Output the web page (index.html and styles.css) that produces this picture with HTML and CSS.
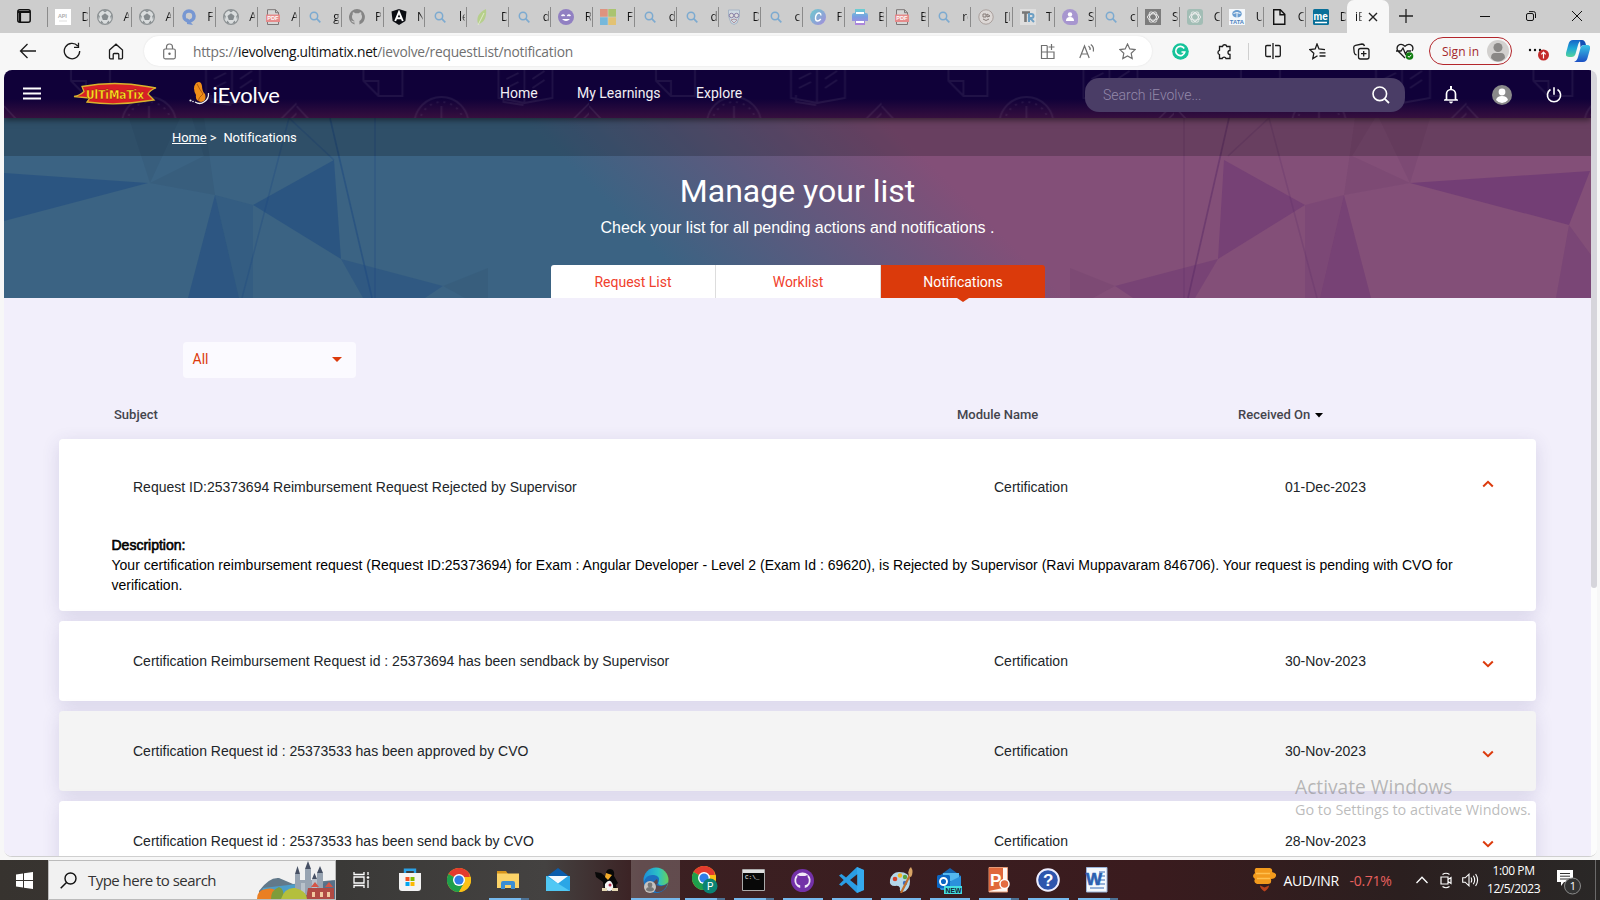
FILE: index.html
```html
<!DOCTYPE html>
<html lang="en">
<head>
<meta charset="utf-8">
<title>iEvolve</title>
<link rel="stylesheet" href="styles.css">
</head>
<body>
<svg class="defs" width="0" height="0">
  <symbol id="ball" viewBox="0 0 16 16"><circle cx="8" cy="8" r="7.400" fill="#d9dcdd" stroke="#8d9294" stroke-width="1.200"/><path d="M8 4.300l3.500 2.600-1.300 4.100H5.800L4.500 6.900z" fill="#858b8e"/><path d="M5 1.200h6L8 3.200zM.8 5.500l2 1.500-.8 3.500zM15.200 5.500l-2 1.500.8 3.500zM3.500 13.500l1-2 2.300 3.200zM12.500 13.500l-1-2-2.300 3.200z" fill="#858b8e"/></symbol>
  <symbol id="mag" viewBox="0 0 16 16"><circle cx="7" cy="7" r="3.700" fill="none" stroke="#7caad0" stroke-width="1.500"/><path d="M9.700 9.700l3.600 3.600" stroke="#7caad0" stroke-width="1.700"/></symbol>
  <symbol id="pdf" viewBox="0 0 16 16"><path d="M2.500 15.500V.7h8l3 3v11.800z" fill="#d6d6d6" stroke="#7b7676"/><path d="M10.500.7v3h3" fill="none" stroke="#7b7676"/><rect x="1" y="5.500" width="14" height="7.500" fill="#e58b8b"/><text x="2.300" y="11.400" font-size="5.600" font-weight="700" fill="#fff" font-family="Liberation Sans">PDF</text></symbol>
  <symbol id="gpt" viewBox="0 0 16 16"><g fill="none" stroke="#eee" stroke-width=".9"><ellipse cx="8" cy="8" rx="5.600" ry="3.200"/><ellipse cx="8" cy="8" rx="5.600" ry="3.200" transform="rotate(60 8 8)"/><ellipse cx="8" cy="8" rx="5.600" ry="3.200" transform="rotate(120 8 8)"/></g></symbol>
  <symbol id="chev" viewBox="0 0 12 8"><path d="M1.200 1.500L6 6.200l4.800-4.700" fill="none" stroke="#dc3a0c" stroke-width="2"/></symbol>
  <symbol id="chrome" viewBox="0 0 24 24"><circle cx="12" cy="12" r="12" fill="#fbc116"/><path d="M12 12L1.600 6A12 12 0 0 1 22.400 6z" fill="#e33b2e"/><path d="M12 12L1.600 6A12 12 0 0 0 12 24l5.200-9z" fill="#1e9f4c"/><path d="M12 12h10.400A12 12 0 0 0 22.400 6H12z" fill="#e33b2e"/><path d="M17 9h6.600A12 12 0 0 1 12 24l5.200-9z" fill="#fbc116"/><circle cx="12" cy="12" r="6" fill="#fff"/><circle cx="12" cy="12" r="4.600" fill="#2f7de8"/></symbol>
</svg>

<header class="tabstrip">
  <div class="tab-actions"><svg width="14" height="14" viewBox="0 0 14 14"><rect x=".8" y=".8" width="12.400" height="12.400" rx="2" fill="none" stroke="#111" stroke-width="1.500"/><path d="M1 3h12M3 3v10" stroke="#111" stroke-width="2.200"/></svg></div>
  <div class="tab"><svg viewBox="0 0 16 16"><path fill="#fff" d="M0 0h16v16H0z"/><text x="3" y="9" font-size="5.500" font-weight="700" fill="#aaa" font-family="Lato">API</text><path d="M4 12h8" stroke="#ddd"/></svg><span>D</span></div>
  <div class="tab"><svg><use href="#ball"/></svg><span>A</span></div>
  <div class="tab"><svg><use href="#ball"/></svg><span>A</span></div>
  <div class="tab"><svg viewBox="0 0 16 16"><circle cx="8" cy="7" r="5" fill="none" stroke="#7797d2" stroke-width="3.600"/><path d="M6 9l6 7-6-1z" fill="#7797d2"/><path d="M6 8l3 0 0 3z" fill="#ccc"/></svg><span>F</span></div>
  <div class="tab"><svg><use href="#ball"/></svg><span>A</span></div>
  <div class="tab"><svg><use href="#pdf"/></svg><span>A</span></div>
  <div class="tab"><svg><use href="#mag"/></svg><span>g</span></div>
  <div class="tab"><svg viewBox="0 0 16 16"><path d="M8 0a8 8 0 0 0-2.500 15.600v-2.200C3 14 2.800 12 2 11.500c1.500-.5 2 1.300 3.600.8C6 11.500 3 11.500 3 7.500c0-1 .3-1.600.8-2.200-.2-.7-.1-1.500.1-2 1 0 1.600.5 2.200.9h3.800c.6-.4 1.200-.9 2.200-.9.200.5.300 1.300.1 2 .5.600.8 1.200.8 2.200 0 4-3 4-2.600 4.800v3.300A8 8 0 0 0 8 0z" fill="#858585"/></svg><span>P</span></div>
  <div class="tab"><svg viewBox="0 0 16 16"><path d="M8 0l7.500 2.500L14.400 12 8 16l-6.400-4L.5 2.500z" fill="#0b0d12"/><path d="M4.200 12L8 3l3.800 9M5.800 9.200h4.400" fill="none" stroke="#fff" stroke-width="1.900"/></svg><span>N</span></div>
  <div class="tab"><svg><use href="#mag"/></svg><span>le</span></div>
  <div class="tab"><svg viewBox="0 0 16 16"><path d="M12 0C4 4 2 9 4.200 15 10 14 13 8 12 0z" fill="#b6cf8b"/><path d="M10 4L4 16" stroke="#dfe9ca"/></svg><span>D</span></div>
  <div class="tab"><svg><use href="#mag"/></svg><span>d</span></div>
  <div class="tab"><svg viewBox="0 0 16 16"><circle cx="8" cy="8" r="8" fill="#9180c2"/><path d="M4 10q4 4 8 0z" fill="#fff"/><path d="M3.600 7q1.500-2 3 0M9.400 7q1.500-2 3 0" fill="none" stroke="#fff" stroke-width="1.500"/></svg><span>R</span></div>
  <div class="tab"><svg viewBox="0 0 16 16"><path fill="#de937f" d="M0 0h7.700v7.700H0z"/><path fill="#aac470" d="M8.300 0H16v7.700H8.300z"/><path fill="#76b8db" d="M0 8.300h7.700V16H0z"/><path fill="#e2c274" d="M8.300 8.300H16V16H8.300z"/></svg><span>F</span></div>
  <div class="tab"><svg><use href="#mag"/></svg><span>d</span></div>
  <div class="tab"><svg><use href="#mag"/></svg><span>d</span></div>
  <div class="tab"><svg viewBox="0 0 16 16"><path d="M2.500 1h11v6L11 14q-3 3-6 0L2.500 7z" fill="#ced9e2" stroke="#a6b4c5"/><circle cx="5.500" cy="6.500" r="2.200" fill="#ddd" stroke="#897fa5"/><circle cx="10.500" cy="6.500" r="2.200" fill="#ddd" stroke="#897fa5"/><path d="M5 11q3-2 6 0l-3 3z" fill="none" stroke="#b0949e"/></svg><span>D</span></div>
  <div class="tab"><svg><use href="#mag"/></svg><span>c</span></div>
  <div class="tab"><svg viewBox="0 0 16 16"><defs><linearGradient id="cv" x2="1" y2="1"><stop stop-color="#6bcbcf"/><stop offset="1" stop-color="#a48bdb"/></linearGradient></defs><circle cx="8" cy="8" r="8" fill="url(#cv)"/><path d="M11 6.500C11 3.500 8 3.300 6.500 5.500S5 12 7.500 12c1.500 0 2.500-1 3.300-2" fill="none" stroke="#fff" stroke-width="1.400"/></svg><span>F</span></div>
  <div class="tab"><svg viewBox="0 0 16 16"><defs><linearGradient id="pr" x2="0" y2="1"><stop stop-color="#6bcfd1"/><stop offset=".5" stop-color="#7b9ce2"/><stop offset="1" stop-color="#b383da"/></linearGradient></defs><path d="M3 4V0h10v4h1q2 0 2 2v6h-3v4H3v-4H0V6q0-2 2-2z" fill="url(#pr)"/><path d="M4 4h8M4 13h8" stroke="#fff" stroke-width="2"/></svg><span>B</span></div>
  <div class="tab"><svg><use href="#pdf"/></svg><span>B</span></div>
  <div class="tab"><svg><use href="#mag"/></svg><span>re</span></div>
  <div class="tab"><svg viewBox="0 0 16 16"><circle cx="8" cy="8" r="7.200" fill="#ddd8d6" stroke="#aaa09d"/><path d="M5 5h3v3H5zM9 5l3 2-3 1zM5 10q3 3 6 0" fill="none" stroke="#877d79"/></svg><span>[I</span></div>
  <div class="tab"><svg viewBox="0 0 16 16"><path fill="#dedede" d="M0 0h16v16H0z"/><path d="M2 3.500h8M5.500 3v10" stroke="#777" stroke-width="2.600"/><path d="M9 13V5h2.500a2 2 0 0 1 0 4H10l4 4" fill="none" stroke="#6c9fc4" stroke-width="2"/></svg><span>T.</span></div>
  <div class="tab"><svg viewBox="0 0 16 16"><path d="M8 0a8 8 0 0 1 8 8v4q0 4-4 4H8A8 8 0 0 1 8 0z" fill="#a796cf"/><circle cx="8" cy="5.500" r="2.200" fill="#fff"/><path d="M4 12q0-4 4-4t4 4z" fill="#fff"/></svg><span>S</span></div>
  <div class="tab"><svg><use href="#mag"/></svg><span>c</span></div>
  <div class="tab"><svg viewBox="0 0 16 16"><path fill="#7c7c7c" d="M0 0h16v16H0z"/><use href="#gpt"/></svg><span>S</span></div>
  <div class="tab"><svg viewBox="0 0 16 16"><rect width="16" height="16" rx="3" fill="#a2bdb5"/><use href="#gpt"/></svg><span>C</span></div>
  <div class="tab"><svg viewBox="0 0 16 16"><path fill="#f5f8fb" d="M0 0h16v16H0z"/><ellipse cx="8" cy="4.800" rx="4.800" ry="3.700" fill="#6a9dd0"/><path d="M8 3v6M4.500 4.500q3-2 7 0" stroke="#f5f8fb" fill="none"/><text x=".8" y="15" font-size="5.800" font-weight="700" fill="#4c83bf" font-family="Liberation Sans">TATA</text></svg><span>U</span></div>
  <div class="tab"><svg viewBox="0 0 16 16"><path d="M2.700 15.300V.7h6.600l4.500 4.500v10.100zM9 .7v5h5" fill="#dedede" stroke="#111" stroke-width="1.400"/></svg><span>C</span></div>
  <div class="tab"><svg viewBox="0 0 16 16"><rect width="16" height="16" rx="1.500" fill="#096f98"/><text x="0.500" y="10.500" font-size="10" font-weight="700" fill="#fff" font-family="Roboto">me</text><path d="M2 13.500h12" stroke="#fff" stroke-width="1.500"/></svg><span>D</span></div>
  <div class="tab tab-active"><span>iE</span><svg viewBox="0 0 16 16"><path d="M4 4l8 8M12 4l-8 8" stroke="#222" stroke-width="1.400"/></svg></div>
  <svg class="newtab" viewBox="0 0 14 14"><path d="M7 0v14M0 7h14" stroke="#222" stroke-width="1.300"/></svg>
  <div class="winctl">
    <svg viewBox="0 0 10 10"><path d="M0 5.500h10" stroke="#111"/></svg>
    <svg viewBox="0 0 10 10"><rect x=".5" y="2.500" width="7" height="7" rx="1.500" fill="none" stroke="#111"/><path d="M3 .6h4.500q2 0 2 2V7" fill="none" stroke="#111"/></svg>
    <svg viewBox="0 0 10 10"><path d="M0 0l10 10M10 0L0 10" stroke="#111"/></svg>
  </div>
</header>

<div class="toolbar">
  <div class="tb"><svg width="18" height="16" viewBox="0 0 18 16"><path d="M17 8H1.500M8.500 1L1.500 8l7 7" class="k"/></svg></div>
  <div class="tb"><svg width="18" height="18" viewBox="0 0 18 18"><path d="M14.800 4A7.700 7.700 0 1 0 16.700 9M15.500.8v4.500H11" class="k"/></svg></div>
  <div class="tb"><svg width="16" height="17" viewBox="0 0 16 17"><path d="M1.500 7L8 1.200 14.500 7v7.800q0 1-1 1h-2.700v-4.300q0-1-1-1H6.200q-1 0-1 1v4.300H2.500q-1 0-1-1z" class="k"/></svg></div>
  <div class="address">
    <svg class="lock" width="13" height="17" viewBox="0 0 13 17"><path d="M3.500 6V4a3 3 0 0 1 6 0v2M2.200 6h8.600q1.500 0 1.500 1.500v6.800q0 1.500-1.500 1.500H2.200q-1.500 0-1.500-1.500V7.500Q.7 6 2.200 6z" class="g"/><circle cx="6.500" cy="10.800" r="1.200" fill="#666"/></svg>
    <div class="url">https://<b>ievolveng.ultimatix.net</b>/ievolve/requestList/notification</div>
    <div class="ab"><svg width="15" height="15" viewBox="0 0 15 15"><path d="M7 1.500H1.500v13H14V8H1M7.200 1.500v13M11.500 0v6M8.500 3h6" class="g"/></svg></div>
    <div class="ab"><svg width="16" height="15" viewBox="0 0 16 15"><path d="M.8 14L5.500 2l4.700 12M2.500 10h6M9.500 2q2 1.500 1.500 4M11.800.5q3.500 2.500 2.500 7" class="g"/></svg></div>
    <div class="ab"><svg width="17" height="17" viewBox="0 0 17 17"><path d="M8.500 1l2.300 4.900 5.300.7-3.900 3.700 1 5.300-4.700-2.600-4.700 2.600 1-5.300L.9 6.600l5.300-.7z" class="g"/></svg></div>
  </div>
  <div class="tb first"><svg width="17" height="17" viewBox="0 0 17 17"><circle cx="8.500" cy="8.500" r="8.300" fill="#15c39a"/><path d="M12.200 5.500A4.600 4.600 0 1 0 12.800 9H9.500" fill="none" stroke="#fff" stroke-width="1.600"/></svg></div>
  <div class="tb"><svg width="16" height="17" viewBox="0 0 16 17"><path d="M4.500 3.500h2a2.200 2.200 0 0 1 4.300 0h3.200v4a2 2 0 0 0 0 4v4h-4a2 2 0 0 0-3.800 0H3.500v-4a2.200 2.200 0 0 1 0-4.200V3.500z" class="k"/></svg></div>
  <i class="vsep"></i>
  <div class="tb"><svg width="16" height="16" viewBox="0 0 16 16"><path d="M6 2.500H2q-1.300 0-1.300 1.300v8.400q0 1.300 1.300 1.300h4M10 2.500h4q1.300 0 1.300 1.300v8.400q0 1.300-1.300 1.300h-4M8 0v16" class="k"/></svg></div>
  <div class="tb"><svg width="17" height="17" viewBox="0 0 17 17"><path d="M8.500 12.800l-4.700 2.800 1-5.300L.9 6.600l5.300-.7L8 1l2 4.900 6 .7M10.500 9.800h6M10.500 13h6" class="k"/></svg></div>
  <div class="tb"><svg width="17" height="17" viewBox="0 0 17 17"><rect x="5.500" y="5.500" width="10.500" height="10.500" rx="2" class="k"/><path d="M10.700 8v5.500M8 10.700h5.500M3.500 12Q1.500 11.500 1.200 9.500L.7 4.500q0-1.800 1.800-2.200L9 1q2 0 2.500 2" class="k"/></svg></div>
  <div class="tb"><svg width="18" height="17" viewBox="0 0 18 17"><path d="M9 15L2 8q-2-3 .2-5.500Q5.500 0 9 3.300 12.500 0 15.800 2.500 18 5 16 8M0 8h5l2-3 2.500 6 1.800-3H15" class="k"/><circle cx="13.500" cy="13" r="3.800" fill="#107c10"/><path d="M11.800 13l1.300 1.300 2.200-2.500" stroke="#fff" fill="none"/></svg></div>
  <div class="signin">Sign in<svg width="22" height="22" viewBox="0 0 22 22"><circle cx="11" cy="11" r="11" fill="#d2d0ce"/><circle cx="11" cy="7.500" r="4.500" fill="#8a8886"/><path d="M4 18q0-5 4-5h6q4 0 4 5-3 3.500-7 3.500T4 18z" fill="#8a8886"/></svg></div>
  <div class="tb more"><svg width="22" height="20" viewBox="0 0 22 20"><g fill="#111"><circle cx="2" cy="9" r="1.200"/><circle cx="7" cy="9" r="1.200"/><circle cx="12" cy="9" r="1.200"/></g><circle cx="15.500" cy="14" r="5.500" fill="#c42b2b"/><path d="M15.500 17.500v-6M13.300 13.300l2.200-2.300 2.200 2.300" stroke="#fff" fill="none" stroke-width="1.200"/></svg></div>
  <div class="tb copilot"><svg width="24" height="22" viewBox="0 0 24 22"><defs><linearGradient id="c1" x2="0" y2="1"><stop stop-color="#1664c8"/><stop offset=".5" stop-color="#1fa7d6"/><stop offset="1" stop-color="#54d39a"/></linearGradient><linearGradient id="c2" x2="0" y2="1"><stop stop-color="#38c4e6"/><stop offset="1" stop-color="#1c50c4"/></linearGradient></defs><path d="M7 0h9q-3 1-4 5l-2.500 9q-1 3-4 3H3q-4 0-3-4l2.500-9Q3.500 0 7 0z" fill="url(#c1)"/><path d="M17 22H8q3-1 4-5l2.500-9q1-3 4-3H21q4 0 3 4l-2.500 9q-1 4-4.500 4z" fill="url(#c2)"/><path d="M14 0h2q3 0 4 5h-2q-3 0-3.500 3z" fill="#1350b5"/></svg></div>
</div>

<div class="viewport">
<main class="page">
  <nav class="appbar">
    <svg class="pattern" width="1587" height="48"><defs><pattern id="pt" width="292.500" height="48" patternUnits="userSpaceOnUse"><g fill="none" stroke="#fff" stroke-opacity=".065" stroke-width="1.800"><path d="M67 0v11l15 15h24V0M67 11h15v15"/><path d="M202 0v28l26 5 28-5V0M228 0v33M207 25v7l20 3M210 9l12-6M210 18l12-6M236 9l12-8M236 18l12-8"/><circle cx="145" cy="54" r="27"/><circle cx="145" cy="54" r="22" stroke-dasharray="2 5"/><path d="M145 53v-17"/><path d="M280 56l14-14M276 50l18-18M0 36l12 13"/></g></pattern></defs><rect width="1587" height="48" fill="url(#pt)"/></svg>
    <svg class="burger" width="18" height="14" viewBox="0 0 18 14"><path d="M0 1.500h18M0 6.500h18M0 11.500h18" stroke="#fff" stroke-width="2.200"/></svg>
    <svg class="ultimatix" width="84" height="24" viewBox="0 0 84 24"><path d="M1 14.500q6-1 10-5L9 4.500q33-6 65 0l9 1.500q-6 2-8 6l6 6-8 1q-30 5-59 1l3-4z" fill="#d81f26" stroke="#d8b32c" stroke-width="1.300"/><text x="13" y="16.500" font-family="DejaVu Sans" font-weight="700" font-size="12.500" fill="#ffe51f" stroke="#8d1212" stroke-width=".35" textLength="58" lengthAdjust="spacingAndGlyphs">UlTiMaTix</text></svg>
    <div class="brand"><svg width="22" height="24" viewBox="0 0 22 24"><path d="M7 1q5-3 6 3 0 5 3 8 2 7-4 8-6-1-5-7Q3 6 7 1z" fill="#ee8d18"/><path d="M8 2q3 6 6 10-4 3-5 7" fill="none" stroke="#b45a0c"/><path d="M6 20q5 3 9 0 5-3 4.500-9" fill="none" stroke="#eee" stroke-width="1.300"/><circle cx="1.500" cy="18.500" r="1.100" fill="#eee"/><circle cx="4" cy="19.500" r=".8" fill="#eee"/></svg><span>iEvolve</span></div>
    <a class="n1">Home</a><a class="n2">My Learnings</a><a class="n3">Explore</a>
    <div class="search"><span>Search iEvolve...</span><svg width="18" height="18" viewBox="0 0 18 18"><circle cx="7.800" cy="7.800" r="6.800" fill="none" stroke="#fff" stroke-width="1.600"/><path d="M12.800 12.800L17 17" stroke="#fff" stroke-width="1.800"/></svg></div>
    <div class="ic"><svg width="14" height="18" viewBox="0 0 14 18"><path d="M2.500 13V8a4.500 4.500 0 0 1 9 0v5l1.500 1H1z" fill="none" stroke="#fff" stroke-width="1.700"/><path d="M7 0v3" stroke="#fff" stroke-width="2"/><path d="M5 15.500h4q-.5 2-2 2t-2-2z" fill="#fff"/></svg></div>
    <div class="ic"><svg width="20" height="20" viewBox="0 0 20 20"><circle cx="10" cy="10" r="10" fill="#8a8a8a"/><circle cx="10" cy="7" r="3.400" fill="#fff"/><path d="M4 15q1-4 6-4t6 4q-2.500 3-6 3t-6-3z" fill="#fff"/></svg></div>
    <div class="ic"><svg width="16" height="16" viewBox="0 0 16 16"><path d="M4.500 2.500a6.600 6.600 0 1 0 7 0M8 .3v7.500" fill="none" stroke="#fff" stroke-width="1.600"/></svg></div>
  </nav>

  <section class="hero">
    <svg class="hero-art" width="1587" height="180" viewBox="4 118 1587 180">
      <defs>
        <linearGradient id="hg" gradientUnits="userSpaceOnUse" x1="560" y1="156" x2="742" y2="-26"><stop stop-color="#3b6383"/><stop offset="1" stop-color="#834f78"/></linearGradient>
      </defs>
      <path d="M4 118h1587v180H4z" fill="url(#hg)"/>
      <g fill="#1c4780">
        <path d="M4 173l144 10L4 221z" opacity=".5"/>
        <path d="M253 205l81-45 7 99z" opacity=".5"/>
        <path d="M215 195l24 103h-51z" opacity=".45"/>
        <path d="M215 195l38 10v93h-14z" opacity=".22"/>
        <path d="M341 259l102 27-18 12h-62z" opacity=".35"/>
        <path d="M129 118h51l-30 65zM192 118h12l11 77-65-12 54-27z" fill="#2c4a68" opacity=".2"/>
        <path d="M443 286l45-18v30h-23z" fill="#2c4a68" opacity=".2"/>
        <path d="M289 118l-47 180M289 118l45 42M375 118v180" fill="none" stroke="#1c4780" stroke-width="1.500" opacity=".3"/>
        <path d="M330 118l42 180" fill="none" stroke="#1c4780" stroke-width="1.700" opacity=".5"/>
      </g>
      <g fill="#602a70">
        <path d="M1410 183l180-12-21 54z" opacity=".45"/>
        <path d="M1305 205l-81-45-6 99z" opacity=".38"/>
        <path d="M1344 195l-24 103h51z" opacity=".34"/>
        <path d="M1344 195l-39 10v93h15z" opacity=".17"/>
        <path d="M1218 259l-103 27 18 12h62z" opacity=".32"/>
        <path d="M1569 225l22 30v43h-35z" opacity=".25"/>
        <path d="M1430 118h-51l31 65zM1355 118h20l-23 38 58 27-66 12z" fill="#542a58" opacity=".12"/>
        <path d="M1115 286l-45-18v30h23z" fill="#542a58" opacity=".12"/>
        <path d="M1269 118l48 180M1269 118l-41 38M1184 118v180" fill="none" stroke="#5a2a66" stroke-width="1.500" opacity=".25"/>
        <path d="M1229 118l-41 180" fill="none" stroke="#5a2a66" stroke-width="1.700" opacity=".5"/>
      </g>
    </svg>
    <div class="crumbs"><u>Home</u><span class="gt">&gt;</span><span>Notifications</span></div>
    <h1>Manage your list</h1>
    <p>Check your list for all pending actions and notifications .</p>
    <div class="pills"><a>Request List</a><a>Worklist</a><a class="on">Notifications</a></div>
  </section>

  <section class="content">
    <div class="select"><span>All</span><svg width="10" height="5" viewBox="0 0 10 5"><path d="M0 0h10L5 5z" fill="#dc3a0c"/></svg></div>
    <div class="head"><span>Subject</span><span>Module Name</span><span>Received On<svg width="8" height="5" viewBox="0 0 8 5"><path d="M0 0h8L4 4.600z"/></svg></span></div>
    <article class="card open">
      <div class="row"><span>Request ID:25373694 Reimbursement Request Rejected by Supervisor</span><span>Certification</span><span>01-Dec-2023</span><svg class="up"><use href="#chev"/></svg></div>
      <div class="desc"><strong>Description:</strong><br>Your certification reimbursement request (Request ID:25373694) for Exam : Angular Developer - Level 2 (Exam Id : 69620), is Rejected by Supervisor (Ravi Muppavaram 846706). Your request is pending with CVO for<br>verification.</div>
    </article>
    <article class="card"><div class="row"><span>Certification Reimbursement Request id : 25373694 has been sendback by Supervisor</span><span>Certification</span><span>30-Nov-2023</span><svg><use href="#chev"/></svg></div></article>
    <article class="card grey"><div class="row"><span>Certification Request id : 25373533 has been approved by CVO</span><span>Certification</span><span>30-Nov-2023</span><svg><use href="#chev"/></svg></div></article>
    <article class="card"><div class="row"><span>Certification Request id : 25373533 has been send back by CVO</span><span>Certification</span><span>28-Nov-2023</span><svg><use href="#chev"/></svg></div></article>
  </section>
</main>
<div class="scroll"><i></i></div>
</div>

<div class="watermark"><div class="wm1">Activate Windows</div><div class="wm2">Go to Settings to activate Windows.</div></div>

<footer class="taskbar">
  <div class="start"><svg width="17" height="17" viewBox="0 0 17 17"><path d="M0 2.500L7 1.500v6.500H0zM8 1.300L17 0v8H8zM0 9h7v6.500l-7-1zM8 9h9v8l-9-1.300z" fill="#fff"/></svg></div>
  <div class="tsearch"><svg width="17" height="17" viewBox="0 0 17 17"><circle cx="10.500" cy="6.500" r="5.500" fill="none" stroke="#111" stroke-width="1.400"/><path d="M6.500 10.500L.7 16.300" stroke="#111" stroke-width="1.500"/></svg><span>Type here to search</span>
    <svg class="castle" width="78" height="38" viewBox="0 0 78 38"><path d="M2 30q10-14 20-13l14 6 42-4v19H2z" fill="#62798a"/><path d="M6 27l34-4v15H2z" fill="#4d9dc9"/><path d="M60 28q10-10 18-8v18H58z" fill="#56718a"/><g fill="#98a4b2"><path d="M38 13h5v20h-5zM48 8h6v26h-6zM60 12h6v20h-6zM43 19h22v14H43z"/></g><g fill="#b8c1ca"><path d="M44 22h4v10h-4zM55 18h5v14h-5z"/></g><g fill="#465064"><path d="M38 13l2.500-8 2.500 8zM48 8l3-8 3 8zM60 12l3-7 3 7zM55 18l2.500-6 2.500 6z"/></g><path d="M51 27h26v11H49z" fill="#b04a44"/><path d="M54 26l4-5 4 5zM68 26l4-5 4 5z" fill="#d45546"/><path d="M55 31h3v5h-3zM63 31h3v5h-3zM70 31h3v5h-3z" fill="#f2c8a0"/><path d="M0 38q0-9 9-10 8-2 12 4v6z" fill="#ea7f22"/><path d="M14 38q0-9 8-12 6 2 4 12z" fill="#7f9c3a"/><path d="M24 38q4-12 14-11 12 3 12 11z" fill="#b4bf3c"/></svg></div>
  <div class="t"><svg width="17" height="16" viewBox="0 0 17 16"><path d="M1 0v2.500h10V0M1 16v-2.500h10V16M1 5h10v6H1zM15 0v3M15 8v8" fill="none" stroke="#fff" stroke-width="1.300"/><circle cx="15" cy="5.500" r="1.300" fill="#fff"/></svg></div>
  <div class="t"><svg width="24" height="24" viewBox="0 0 24 24"><path d="M7 6V1.700h10V6" fill="none" stroke="#2aa2e8" stroke-width="2.400"/><path d="M1 5h22v15q0 3-3 3H4q-3 0-3-3z" fill="#f3f3f3"/><path fill="#f05022" d="M7.500 9h4v4h-4z"/><path fill="#80bb01" d="M12.500 9h4v4h-4z"/><path fill="#01a6f0" d="M7.500 14h4v4h-4z"/><path fill="#fdb902" d="M12.500 14h4v4h-4z"/></svg></div>
  <div class="t"><svg width="24" height="24"><use href="#chrome"/></svg></div>
  <div class="t run two"><svg width="22" height="20" viewBox="0 0 22 20"><path d="M0 1h9l2 3H0z" fill="#d7951b"/><path d="M0 3.500h22v14.500H0z" fill="#fbd368"/><path d="M4 19v-6q0-2 2-2h10q2 0 2 2v6h-4v-4H8v4z" fill="#3a8ed4"/></svg></div>
  <div class="t"><svg width="24" height="24" viewBox="0 0 24 24"><path d="M0 9L12 0l12 9z" fill="#0b5cab"/><path d="M0 8h24v15H0z" fill="#2ba6e6"/><path d="M0 8l24 15H0z" fill="#50c8f4"/><path d="M2 8h20l-10 7.500z" fill="#f4f9fd"/></svg></div>
  <div class="t"><svg width="24" height="24" viewBox="0 0 24 24"><path d="M0 4l6 1 5 4q-1-8 4-8t4 7l4 7-2 2 1 4-6 2H9l-1-9-7-5z" fill="#080808"/><path d="M10 16q5-7 8 1 1 6-4 6t-4-7z" fill="#f5f5f5"/><path d="M11 5l6 2-4 5-3-3z" fill="#f3ab2a"/><path d="M7 20h5v3H7zM17 20h6v3h-6z" fill="#e7d9b5"/><circle cx="15" cy="17" r="1.500" fill="#b52b4a"/></svg></div>
  <div class="t run cur"><svg width="26" height="26" viewBox="0 0 26 26"><defs><linearGradient id="eg" x2="1"><stop stop-color="#1b8fdb"/><stop offset=".6" stop-color="#2cc3c4"/><stop offset="1" stop-color="#68d05a"/></linearGradient></defs><circle cx="13" cy="13" r="12.500" fill="url(#eg)"/><path d="M1 15Q3 7 11 8q6 1 5 6-2 3 1 4 5 1 8-3l-2 6q-4 5-10 5Q2 25 1 15z" fill="#1c6fc0"/><path d="M14 12q2 4-1 6 7 3 12-2-4 10-12 9l-5-8z" fill="#5c474b"/><circle cx="7" cy="20" r="6" fill="#c5c2c0"/><circle cx="7" cy="18" r="2.400" fill="#777"/><path d="M3 23q0-3 4-3t4 3q-4 3-8 0z" fill="#777"/></svg></div>
  <div class="t run two"><svg width="28" height="28" viewBox="0 0 28 28"><svg x="1" y="0" width="24" height="24"><use href="#chrome"/></svg><circle cx="19" cy="20" r="7.500" fill="#0a8374"/><text x="16" y="24" font-size="10" fill="#fff" font-family="Roboto">P</text></svg></div>
  <div class="t run two"><svg width="23" height="22" viewBox="0 0 23 22"><path d="M.5.500h22v21H.5z" fill="#080808" stroke="#aaa"/><path d="M1 1h21v3H1z" fill="#dedede"/><text x="3" y="10" font-size="6" fill="#fff" font-family="Liberation Mono">C:\_</text></svg></div>
  <div class="t run"><svg width="23" height="23" viewBox="0 0 16 16"><circle cx="8" cy="8" r="8" fill="#7331a8"/><path d="M8 2.500A5.500 5.500 0 0 0 6.400 13.300v-2C4 11 3.500 9.500 3.700 7.200q.1-.9.700-1.500l.1-1.600 1.700.8h3.600l1.700-.8.100 1.600q.6.600.7 1.500c.2 2.300-.3 3.800-2.700 4.100v2A5.500 5.500 0 0 0 8 2.500z" fill="#f2eaf8"/></svg></div>
  <div class="t run"><svg width="25" height="26" viewBox="0 0 25 26"><path d="M18 0l7 3v20l-7 3L7 15.500 2.500 19 0 17.500 4.700 13 0 8.500 2.500 7 7 10.500zM18.500 7L11 13l7.500 6z" fill="#2a9de4" fill-rule="evenodd"/><path d="M18 0l7 3v20l-7 3z" fill="#3db3f5" opacity=".6"/></svg></div>
  <div class="t run"><svg width="24" height="26" viewBox="0 0 24 26"><path d="M10 5q11 0 11 9t-7 11q-4 0-3-4-1-3-5-2-6 0-5-6 2-8 9-8z" fill="#b4d7ea"/><circle cx="6" cy="12" r="2.300" fill="#d6432b"/><circle cx="11" cy="8.500" r="2.200" fill="#f3b927"/><circle cx="16" cy="10" r="2.200" fill="#56a540"/><circle cx="16" cy="16" r="2.200" fill="#3e6fc0"/><path d="M21 8L12 26" stroke="#bf6f2e" stroke-width="2.200"/><path d="M20 9q-2-6 2-9 3 5 0 10z" fill="#d8a465"/></svg></div>
  <div class="t run"><svg width="25" height="27" viewBox="0 0 25 27"><path d="M2 9L13 1l11 8v12H2z" fill="#1462ad"/><path d="M6 6h16v8H6z" fill="#54b7ef"/><path d="M2 20l22-11v14H4z" fill="#2b91dc"/><rect x="0" y="8" width="13" height="13" rx="1.500" fill="#0b66c3"/><circle cx="6.500" cy="14.500" r="3.500" fill="none" stroke="#fff" stroke-width="1.900"/><path fill="#45dce0" d="M7 19h18v8H7z"/><text x="8.500" y="25.500" font-size="6.800" font-weight="700" fill="#123" font-family="Liberation Sans">NEW</text></svg></div>
  <div class="t run two"><svg width="24" height="26" viewBox="0 0 24 26"><path d="M2 .5h18.500V25H2z" fill="#fff7f2" stroke="#e69a78"/><path d="M2 1h14v20L2 24z" fill="#e0683c"/><text x="3" y="18.500" font-size="17" font-weight="700" fill="#fff" font-family="Liberation Sans">P</text><circle cx="17.500" cy="17" r="4.500" fill="#e46c41" stroke="#fff" stroke-width="1.500"/></svg></div>
  <div class="t run"><svg width="24" height="26" viewBox="0 0 24 26"><circle cx="12" cy="13" r="10.800" fill="#2e55ad" stroke="#eef" stroke-width="2"/><text x="7" y="19" font-size="17" font-weight="700" fill="#fff" font-family="Liberation Sans">?</text></svg></div>
  <div class="t run two"><svg width="24" height="26" viewBox="0 0 24 26"><path d="M1.500.5H22V25H1.500z" fill="#f4f8fd" stroke="#9ab4da"/><path d="M14 5h6M14 9h6M15 13h5M13 17h7M5 21h14" stroke="#3568b5"/><text x="1" y="18" font-size="17" font-weight="700" fill="#2b5fb0" stroke="#2b5fb0" stroke-width=".6" font-family="Liberation Sans">W</text></svg></div>
  <div class="fx"><svg width="23" height="24" viewBox="0 0 23 24"><path d="M3 0h14q3 1 2 4 5 1 4 4t-5 3q1 5-3 5H4q-4-2-2-5-4-3 0-6-1-4 1-5z" fill="#f29a1d"/><path d="M3 5.500h14M4 10.500h13" stroke="#ffc04f" stroke-width="1.300"/><path d="M7 17.500l4.500 2 4.500-2q0 3-4.500 6Q7 20.500 7 17.500z" fill="#b9411c"/></svg><span class="fx1">AUD/INR</span><span class="fx2">-0.71%</span></div>
  <svg class="caret" width="12" height="8" viewBox="0 0 12 8"><path d="M.5 7L6 1.200 11.500 7" fill="none" stroke="#fff" stroke-width="1.300"/></svg>
  <svg class="cam" width="12" height="17" viewBox="0 0 12 17"><path d="M1 5h7v7H1zM8 7.500l3-2v6l-3-2M2.500 2.500q3.500-2.500 7 0M2.500 14.500q3.500 2.500 7 0" fill="none" stroke="#fff" stroke-width="1.200"/></svg>
  <svg class="spk" width="17" height="14" viewBox="0 0 17 14"><path d="M.7 4.800h2.500L7 1.200v11.600L3.200 9.200H.7zM9 4.500q1.500 2.500 0 5M11.300 2.800q2.800 4.200 0 8.400M13.600 1q4 6 0 12" fill="none" stroke="#fff" stroke-width="1.100"/></svg>
  <div class="clock"><span>1:00 PM</span><span>12/5/2023</span></div>
  <svg class="notif" width="26" height="26" viewBox="0 0 26 26"><path d="M0 1h16v12H7l-3 4v-4H0z" fill="#fff"/><path d="M3 4.500h10M3 7.200h10M3 10h10" stroke="#333"/><circle cx="15.500" cy="17" r="8" fill="#333" stroke="#8b8b8b"/><text x="12.700" y="21" font-size="11" fill="#fff" font-family="Open Sans">1</text></svg>
  <i class="peek"></i>
</footer>
</body>
</html>
```

FILE: styles.css
```css
* { box-sizing: border-box; }
body { margin: 0; width: 1600px; height: 900px; overflow: hidden; background: #f7f7f7; font-family: Roboto, "Liberation Sans", sans-serif; display: flex; flex-direction: column; }
svg { display: block; flex: none; }
.defs { position: absolute; }

.tabstrip { height: 33px; background: #cdcdcd; display: flex; align-items: stretch; flex: none; font: 12px "Open Sans", "Noto Sans", sans-serif; color: #111; }
.tab-actions { width: 47px; padding: 9px 0 0 17px; }
.tab { width: 41.950px; border-left: 1px solid #8b8b8b; margin: 7px 0 6px; display: flex; align-items: center; padding-left: 7px; height: 20px; }
.tab svg { width: 16px; height: 16px; }
.tab span { margin-left: 10.500px; width: 6px; overflow: hidden; white-space: nowrap; line-height: 18px; -webkit-mask-image: linear-gradient(90deg, #000 50%, rgba(0,0,0,.35)); }
.tab-active { width: 42px; margin: 0; height: 33px; background: #f7f7f7; border: 0; border-radius: 7px 7px 0 0; padding: 0 0 0 8px; }
.tab-active span { margin: 0; width: 7px; }
.tab-active svg { margin-left: 3px; }
.newtab { width: 14px; height: 14px; margin: 9px 0 0 10px; }
.winctl { margin-left: auto; display: flex; gap: 36px; padding: 11px 18px 0 0; }
.winctl svg { width: 10px; height: 10px; }

.toolbar { height: 37px; flex: none; display: flex; align-items: center; padding: 0 0 1px 6px; }
.k { fill: none; stroke: #1b1b1b; stroke-width: 1.300; }
.g { fill: none; stroke: #707070; stroke-width: 1.200; }
.tb { width: 44px; display: flex; justify-content: center; align-items: center; flex: none; }
.address { width: 1008px; height: 30px; margin-left: 6px; border-radius: 15px; background: #fff; box-shadow: 0 0 2px rgba(0,0,0,.1); display: flex; align-items: center; padding: 0 5px 0 19px; flex: none; }
.url { font: 13.800px "Open Sans", sans-serif; color: #707070; margin: 0 auto 0 17px; letter-spacing: -.26px; white-space: nowrap; }
.url b { font-weight: 400; color: #111; }
.ab { width: 40px; display: flex; justify-content: center; }
.tb.first { margin-left: 6px; }
.vsep { width: 1px; height: 17px; background: #cfcfcf; margin: 0 2px 0 2px; }
.signin { width: 83px; height: 28px; border: 1.500px solid #b3262b; border-radius: 14px; margin-left: 2px; color: #a4262c; font: 12px "Open Sans", sans-serif; display: flex; align-items: center; justify-content: space-between; padding: 0 2px 0 12px; white-space: nowrap; flex: none; }
.more { margin-left: 5px; }
.copilot { width: 34px; }

.viewport { margin-left: 4px; height: 787px; width: 1593px; display: flex; border-radius: 8px; overflow: hidden; flex: none; border-bottom: 1px solid #cfcfcf; background: #fff; }
.page { width: 1587px; background: #f2effb; overflow: hidden; flex: none; }
.scroll { width: 6px; background: #fcfcfc; }
.scroll i { display: block; height: 518px; background: #d6d5db; border-radius: 0 0 3px 3px; }

.appbar { position: relative; z-index: 2; height: 48px; display: flex; align-items: center; background: linear-gradient(#100139 60%, #360f3e); box-shadow: 0 2px 6px rgba(0,0,0,.5); color: #fff; font-size: 14px; }
.appbar > * { position: relative; flex: none; }
.appbar .pattern { position: absolute; left: 0; top: 0; }
.burger { margin-left: 19px; }
.ultimatix { margin-left: 31.500px; }
.brand { display: flex; align-items: center; margin-left: 32px; width: 94px; }
.brand span { font: 22px Lato, sans-serif; letter-spacing: -.2px; margin-left: 2px; }
.appbar a { white-space: nowrap; color: #f2eff5; margin-top: -2px; }
.n1 { margin-left: 217.500px; width: 77px; }
.n2 { width: 119px; }
.n3 { width: 389px; }
.search { width: 320px; height: 34px; border-radius: 14px; background: #4a3d66; display: flex; align-items: center; justify-content: space-between; padding: 0 15px 0 18px; color: #9489aa; font-weight: 300; margin-top: 2px; }
.ic { width: 51.500px; display: flex; justify-content: center; margin-top: 2px; }
.search + .ic { margin-left: 20px; }

.hero { position: relative; height: 180px; color: #fff; text-align: center; }
.hero > * { position: relative; }
.hero .hero-art { position: absolute; left: 0; top: 0; }
.crumbs { height: 38px; background: rgba(0,0,0,.2); display: flex; align-items: center; padding-left: 168px; font-size: 13px; letter-spacing: -.08px; }
.gt { margin: 0 7px 0 3px; }
h1 { margin: 15px 0 0; font-weight: 400; font-size: 32px; line-height: 40px; }
.hero p { margin: 7px 0 0; font: 16px/20px "Liberation Sans", Arial, sans-serif; }
.pills { display: flex; width: 494px; margin: 27px 0 0 547px; height: 33px; border-radius: 3px 3px 0 0; font-size: 14px; line-height: 34px; }
.pills a { flex: 1; background: #fff; color: #f0402c; border-right: 1px solid #ddd; position: relative; }
.pills a:first-child { border-radius: 3px 0 0 0; }
.pills .on { background: #db3a0b; color: #fff; border: 0; border-radius: 0 3px 0 0; }
.on::after { content: ""; position: absolute; left: 76px; top: 33px; border: 6px solid transparent; border-top: 4px solid #db3a0b; border-bottom: 0; }

.content { padding: 44px 55px 0; }
.select { width: 173px; height: 36px; margin-left: 124px; border-radius: 4px; background: #fbfaff; display: flex; align-items: center; justify-content: space-between; padding: 0 14px 2px 9.500px; font-size: 14px; color: #dc3a0c; }
.head { display: grid; grid-template-columns: 843px 281px auto; padding: 27px 0 14px 55px; font-size: 13px; line-height: 20px; font-weight: 500; color: #44444c; }
.head span { display: flex; align-items: center; gap: 5px; }
.card { background: #fff; border-radius: 4px; height: 80px; margin-bottom: 10px; box-shadow: 0 4px 18px rgba(60,50,120,.14); font: 14px/20px "Liberation Sans", Arial, sans-serif; color: #212529; }
.card.grey { background: #f4f4f4; }
.row { height: 80px; display: grid; grid-template-columns: 861px 291px 197px auto; align-items: center; padding-left: 74px; white-space: nowrap; }
.row svg { width: 12px; height: 8px; margin-top: 5px; }
.open { height: 172px; }
.open .row { height: 96px; }
.open .row svg { transform: rotate(180deg); margin: 0 0 6px; }
.desc { padding: 0 0 0 52.500px; color: #000; white-space: nowrap; }
.desc strong { font-weight: 400; -webkit-text-stroke: .6px #000; }

.watermark { position: absolute; left: 1295px; top: 774px; color: rgba(120,120,120,.5); font-family: "Open Sans", sans-serif; white-space: nowrap; }
.wm1 { font-size: 19.200px; line-height: 26px; }
.wm2 { font-size: 14.400px; line-height: 20px; }

.taskbar { height: 40px; margin-top: auto; position: relative; z-index: 3; display: flex; align-items: center; flex: none; color: #fff; background: linear-gradient(90deg, #37332f 0, #3a3937 340px, #444241 545px, #3b2022 640px, #3a1b1e 1150px, #2b1f1f 1400px, #2a2827 1600px); font-family: "Open Sans", sans-serif; }
.taskbar > * { flex: none; }
.start { width: 48px; display: flex; justify-content: center; }
.tsearch { width: 288px; height: 40px; background: #f1f1f1; border: 1px solid #bbb; color: #333; font-size: 15px; display: flex; align-items: center; padding-left: 11px; white-space: nowrap; overflow: hidden; }
.tsearch span { margin-left: 11px; letter-spacing: -.53px; }
.castle { margin-left: auto; }
.t { width: 49.050px; height: 40px; display: flex; align-items: center; justify-content: center; position: relative; }
.tsearch + .t { margin-left: .8px; }
.run::after { content: ""; position: absolute; left: 5px; right: 4px; bottom: 0; height: 2px; background: #76b9ed; }
.two::after { background: linear-gradient(90deg, #76b9ed 80%, #4c7193 80%); }
.cur { background: rgba(255,255,255,.2); }
.cur::after { left: 0; right: 0; }
.fx { margin-left: 131px; display: flex; align-items: center; font-size: 14px; width: 163px; white-space: nowrap; }
.fx1 { margin-left: 8px; width: 66px; letter-spacing: -.3px; }
.fx2 { color: #e8605e; letter-spacing: -.3px; }
.cam { margin-left: 12px; }
.spk { margin-left: 10px; }
.clock { width: 70px; display: flex; flex-direction: column; text-align: center; font-size: 12px; line-height: 18px; letter-spacing: -.4px; }
.notif { margin-left: 8px; margin-top: 4px; }
.peek { width: 1px; height: 40px; background: #6b6a6a; margin-left: auto; margin-right: 4px; }
```
